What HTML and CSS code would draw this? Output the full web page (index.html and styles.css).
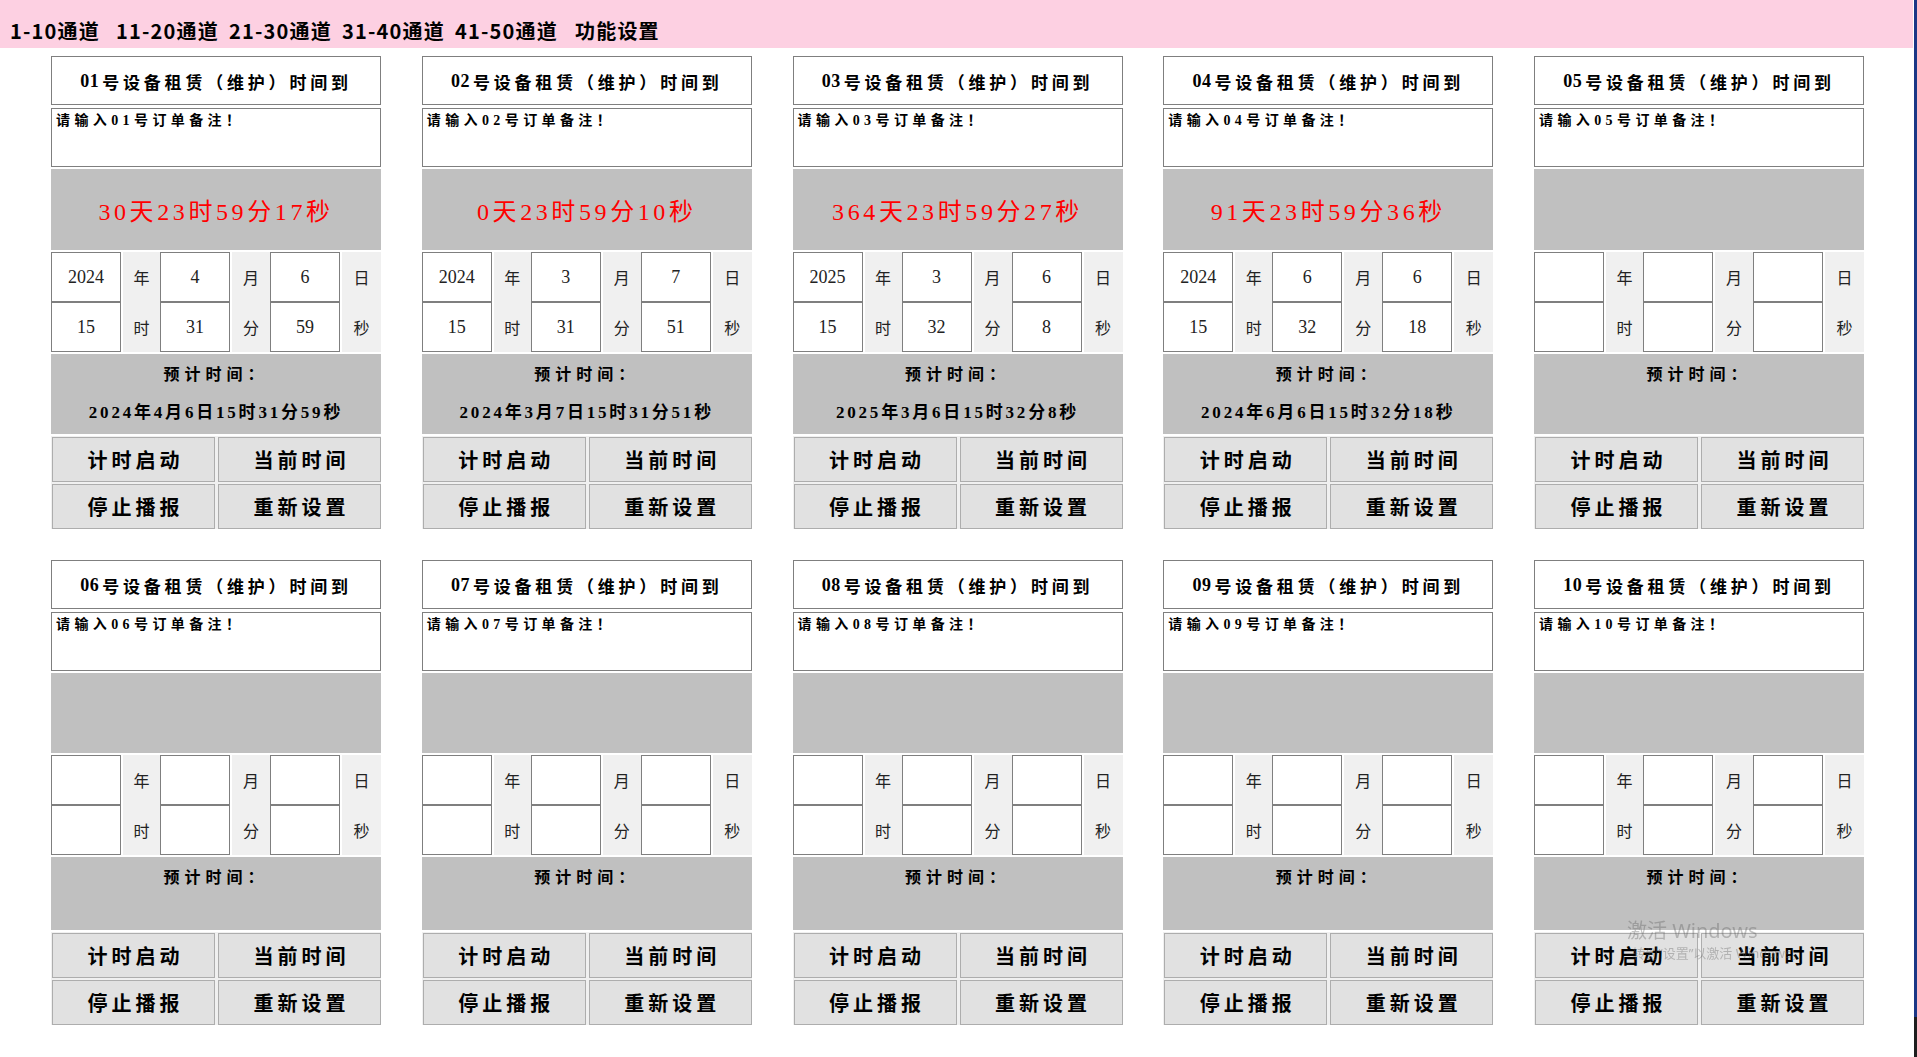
FILE: index.html
```html
<!DOCTYPE html>
<html lang="zh-CN">
<head>
    <meta charset="UTF-8">
    <meta name="viewport" content="width=device-width, initial-scale=1.0">
    <title>设备租赁计时</title>
    <link rel="stylesheet" href="styles.css">
</head>
<body>
<div class="page">

    <div class="menu">
        <span class="menu-item first">1-10通道</span>
        <span class="menu-item">11-20通道</span>
        <span class="menu-item">21-30通道</span>
        <span class="menu-item">31-40通道</span>
        <span class="menu-item">41-50通道</span>
        <span class="menu-item last">功能设置</span>
    </div>

    <div class="cards">

        <!-- 01 -->
        <div class="card">
            <div class="title"><span class="no">01</span>号设备租赁（维护）时间到</div>
            <textarea class="remark">请输入01号订单备注！</textarea>
            <div class="countdown">30天23时59分17秒</div>
            <div class="date-grid">
                <input class="num" value="2024"><span class="unit">年</span>
                <input class="num" value="4"><span class="unit">月</span>
                <input class="num" value="6"><span class="unit">日</span>
                <input class="num" value="15"><span class="unit">时</span>
                <input class="num" value="31"><span class="unit">分</span>
                <input class="num" value="59"><span class="unit">秒</span>
            </div>
            <div class="expect">
                <div class="expect-label">预计时间：</div>
                <div class="expect-value">2024年4月6日15时31分59秒</div>
            </div>
            <div class="buttons">
                <button>计时启动</button><button>当前时间</button>
                <button>停止播报</button><button>重新设置</button>
            </div>
        </div>

        <!-- 02 -->
        <div class="card">
            <div class="title"><span class="no">02</span>号设备租赁（维护）时间到</div>
            <textarea class="remark">请输入02号订单备注！</textarea>
            <div class="countdown">0天23时59分10秒</div>
            <div class="date-grid">
                <input class="num" value="2024"><span class="unit">年</span>
                <input class="num" value="3"><span class="unit">月</span>
                <input class="num" value="7"><span class="unit">日</span>
                <input class="num" value="15"><span class="unit">时</span>
                <input class="num" value="31"><span class="unit">分</span>
                <input class="num" value="51"><span class="unit">秒</span>
            </div>
            <div class="expect">
                <div class="expect-label">预计时间：</div>
                <div class="expect-value">2024年3月7日15时31分51秒</div>
            </div>
            <div class="buttons">
                <button>计时启动</button><button>当前时间</button>
                <button>停止播报</button><button>重新设置</button>
            </div>
        </div>

        <!-- 03 -->
        <div class="card">
            <div class="title"><span class="no">03</span>号设备租赁（维护）时间到</div>
            <textarea class="remark">请输入03号订单备注！</textarea>
            <div class="countdown">364天23时59分27秒</div>
            <div class="date-grid">
                <input class="num" value="2025"><span class="unit">年</span>
                <input class="num" value="3"><span class="unit">月</span>
                <input class="num" value="6"><span class="unit">日</span>
                <input class="num" value="15"><span class="unit">时</span>
                <input class="num" value="32"><span class="unit">分</span>
                <input class="num" value="8"><span class="unit">秒</span>
            </div>
            <div class="expect">
                <div class="expect-label">预计时间：</div>
                <div class="expect-value">2025年3月6日15时32分8秒</div>
            </div>
            <div class="buttons">
                <button>计时启动</button><button>当前时间</button>
                <button>停止播报</button><button>重新设置</button>
            </div>
        </div>

        <!-- 04 -->
        <div class="card">
            <div class="title"><span class="no">04</span>号设备租赁（维护）时间到</div>
            <textarea class="remark">请输入04号订单备注！</textarea>
            <div class="countdown">91天23时59分36秒</div>
            <div class="date-grid">
                <input class="num" value="2024"><span class="unit">年</span>
                <input class="num" value="6"><span class="unit">月</span>
                <input class="num" value="6"><span class="unit">日</span>
                <input class="num" value="15"><span class="unit">时</span>
                <input class="num" value="32"><span class="unit">分</span>
                <input class="num" value="18"><span class="unit">秒</span>
            </div>
            <div class="expect">
                <div class="expect-label">预计时间：</div>
                <div class="expect-value">2024年6月6日15时32分18秒</div>
            </div>
            <div class="buttons">
                <button>计时启动</button><button>当前时间</button>
                <button>停止播报</button><button>重新设置</button>
            </div>
        </div>

        <!-- 05 -->
        <div class="card">
            <div class="title"><span class="no">05</span>号设备租赁（维护）时间到</div>
            <textarea class="remark">请输入05号订单备注！</textarea>
            <div class="countdown"></div>
            <div class="date-grid">
                <input class="num"><span class="unit">年</span>
                <input class="num"><span class="unit">月</span>
                <input class="num"><span class="unit">日</span>
                <input class="num"><span class="unit">时</span>
                <input class="num"><span class="unit">分</span>
                <input class="num"><span class="unit">秒</span>
            </div>
            <div class="expect">
                <div class="expect-label">预计时间：</div>
                <div class="expect-value long"></div>
            </div>
            <div class="buttons">
                <button>计时启动</button><button>当前时间</button>
                <button>停止播报</button><button>重新设置</button>
            </div>
        </div>

        <!-- 06 -->
        <div class="card">
            <div class="title"><span class="no">06</span>号设备租赁（维护）时间到</div>
            <textarea class="remark">请输入06号订单备注！</textarea>
            <div class="countdown short"></div>
            <div class="date-grid">
                <input class="num"><span class="unit">年</span>
                <input class="num"><span class="unit">月</span>
                <input class="num"><span class="unit">日</span>
                <input class="num"><span class="unit">时</span>
                <input class="num"><span class="unit">分</span>
                <input class="num"><span class="unit">秒</span>
            </div>
            <div class="expect">
                <div class="expect-label">预计时间：</div>
                <div class="expect-value"></div>
            </div>
            <div class="buttons">
                <button>计时启动</button><button>当前时间</button>
                <button>停止播报</button><button>重新设置</button>
            </div>
        </div>

        <!-- 07 -->
        <div class="card">
            <div class="title"><span class="no">07</span>号设备租赁（维护）时间到</div>
            <textarea class="remark">请输入07号订单备注！</textarea>
            <div class="countdown short"></div>
            <div class="date-grid">
                <input class="num"><span class="unit">年</span>
                <input class="num"><span class="unit">月</span>
                <input class="num"><span class="unit">日</span>
                <input class="num"><span class="unit">时</span>
                <input class="num"><span class="unit">分</span>
                <input class="num"><span class="unit">秒</span>
            </div>
            <div class="expect">
                <div class="expect-label">预计时间：</div>
                <div class="expect-value"></div>
            </div>
            <div class="buttons">
                <button>计时启动</button><button>当前时间</button>
                <button>停止播报</button><button>重新设置</button>
            </div>
        </div>

        <!-- 08 -->
        <div class="card">
            <div class="title"><span class="no">08</span>号设备租赁（维护）时间到</div>
            <textarea class="remark">请输入08号订单备注！</textarea>
            <div class="countdown short"></div>
            <div class="date-grid">
                <input class="num"><span class="unit">年</span>
                <input class="num"><span class="unit">月</span>
                <input class="num"><span class="unit">日</span>
                <input class="num"><span class="unit">时</span>
                <input class="num"><span class="unit">分</span>
                <input class="num"><span class="unit">秒</span>
            </div>
            <div class="expect">
                <div class="expect-label">预计时间：</div>
                <div class="expect-value"></div>
            </div>
            <div class="buttons">
                <button>计时启动</button><button>当前时间</button>
                <button>停止播报</button><button>重新设置</button>
            </div>
        </div>

        <!-- 09 -->
        <div class="card">
            <div class="title"><span class="no">09</span>号设备租赁（维护）时间到</div>
            <textarea class="remark">请输入09号订单备注！</textarea>
            <div class="countdown short"></div>
            <div class="date-grid">
                <input class="num"><span class="unit">年</span>
                <input class="num"><span class="unit">月</span>
                <input class="num"><span class="unit">日</span>
                <input class="num"><span class="unit">时</span>
                <input class="num"><span class="unit">分</span>
                <input class="num"><span class="unit">秒</span>
            </div>
            <div class="expect">
                <div class="expect-label">预计时间：</div>
                <div class="expect-value"></div>
            </div>
            <div class="buttons">
                <button>计时启动</button><button>当前时间</button>
                <button>停止播报</button><button>重新设置</button>
            </div>
        </div>

        <!-- 10 -->
        <div class="card">
            <div class="title"><span class="no">10</span>号设备租赁（维护）时间到</div>
            <textarea class="remark">请输入10号订单备注！</textarea>
            <div class="countdown short"></div>
            <div class="date-grid">
                <input class="num"><span class="unit">年</span>
                <input class="num"><span class="unit">月</span>
                <input class="num"><span class="unit">日</span>
                <input class="num"><span class="unit">时</span>
                <input class="num"><span class="unit">分</span>
                <input class="num"><span class="unit">秒</span>
            </div>
            <div class="expect">
                <div class="expect-label">预计时间：</div>
                <div class="expect-value"></div>
            </div>
            <div class="buttons">
                <button>计时启动</button><button>当前时间</button>
                <button>停止播报</button><button>重新设置</button>
            </div>
        </div>

    </div>
</div>

<div class="watermark">
    <div class="wm-big">激活 Windows</div>
    <div class="wm-small">转到“设置”以激活 Windows。</div>
</div>

</body>
</html>
```

FILE: styles.css
```css
html {
    background: linear-gradient(#1b3786 0, #1b3786 1017px, #1e1e1e 1017px);
    min-height: 100%;
}
body {
    margin: 0;
    font-family: "Liberation Serif", "Noto Sans CJK SC", serif;
    color: #000;
}
.page {
    width: 1914px;
    min-height: 100vh;
    background-color: #fff;
}

/* top menu */
.menu {
    width: 1913px;
    height: 48px;
    box-sizing: border-box;
    padding: 18px 0 0 10px;
    background-color: #fdd0e2;
    display: flex;
    gap: 10px;
    font-family: "Noto Sans CJK SC", "Liberation Sans", sans-serif;
    font-size: 20px;
    font-weight: bold;
    line-height: 26px;
    letter-spacing: 1.2px;
}
.menu-item.first {
    margin-right: 6px;
}
.menu-item.last {
    margin-left: 7px;
}

/* cards */
.cards {
    display: grid;
    grid-template-columns: repeat(5, 330px);
    column-gap: 40.75px;
    row-gap: 31px;
    padding: 8px 0 0 51px;
}
.card {
    display: flex;
    flex-direction: column;
    gap: 2px;
}
.title {
    height: 49px;
    box-sizing: border-box;
    border: 1px solid #7f7f7f;
    background: #fff;
    display: flex;
    align-items: center;
    justify-content: center;
    padding-top: 2px;
    font-size: 17px;
    font-weight: bold;
    letter-spacing: 3.8px;
}
.title .no {
    font-size: 18px;
    letter-spacing: 0.5px;
    margin-right: 3px;
}
.remark {
    height: 59px;
    margin: 1px 0 0;
    box-sizing: border-box;
    border: 1px solid #7f7f7f;
    padding: 3px 4px;
    resize: none;
    font-family: "Liberation Serif", "Noto Sans CJK SC", serif;
    font-size: 14px;
    font-weight: bold;
    letter-spacing: 4.4px;
    line-height: 18px;
    color: #000;
}
.countdown {
    height: 81px;
    background-color: #c0c0c0;
    color: #ff0000;
    font-size: 24px;
    letter-spacing: 3.6px;
    display: flex;
    align-items: center;
    justify-content: center;
}
.countdown.short {
    height: 80px;
}

.date-grid {
    display: grid;
    grid-template-columns: 70px 39px 70px 40px 70px 41px;
    grid-template-rows: 50px 50px;
}
.num {
    width: 70px;
    height: 50px;
    box-sizing: border-box;
    border: 1px solid #7f7f7f;
    border-radius: 0;
    padding: 0;
    margin: 0;
    outline: none;
    text-align: center;
    font-family: "Liberation Serif", serif;
    font-size: 18px;
    color: #222;
    background: #fff;
}
.unit {
    margin-left: 2px;
    background-color: #f0f0f0;
    display: flex;
    align-items: center;
    justify-content: center;
    font-family: "Noto Sans CJK SC", serif;
    font-size: 16px;
    color: #222;
}

.expect {
    background-color: #c0c0c0;
    padding-top: 4px;
    text-align: center;
    font-weight: bold;
}
.expect-label {
    height: 33px;
    line-height: 33px;
    font-size: 16px;
    letter-spacing: 5px;
}
.expect-value {
    min-height: 36px;
    line-height: 43px;
    font-size: 17px;
    letter-spacing: 2.8px;
}
.expect-value.long {
    height: 43px;
}

.buttons {
    display: grid;
    grid-template-columns: 163px 163px;
    grid-template-rows: 45px 45px;
    gap: 2px 3px;
    padding: 1px 0 0 1px;
    height: 93px;
    box-sizing: border-box;
    background-color: #f0f0f0;
}
.buttons button {
    margin: 0;
    border: 1px solid #adadad;
    border-radius: 0;
    background-color: #e1e1e1;
    font-family: "Liberation Serif", "Noto Sans CJK SC", serif;
    font-size: 20px;
    font-weight: bold;
    letter-spacing: 4px;
    color: #000;
    padding: 0 0 0 4px;
}

/* system watermark */
.watermark {
    position: fixed;
    left: 1627px;
    top: 918px;
    color: rgba(90, 90, 90, 0.35);
    font-family: "Noto Sans", "Noto Sans CJK SC", sans-serif;
    pointer-events: none;
}
.wm-big {
    font-size: 20px;
    line-height: 26px;
}
.wm-small {
    font-size: 13px;
    line-height: 18px;
    padding-left: 5px;
}
```
